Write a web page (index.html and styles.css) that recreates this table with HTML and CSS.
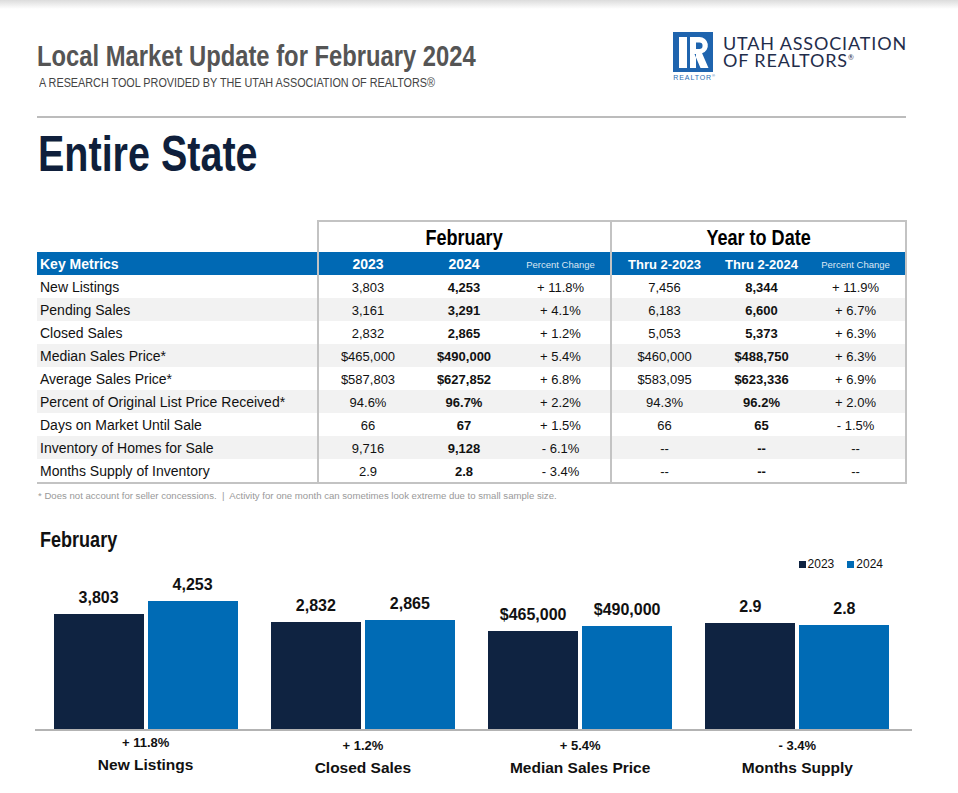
FILE: index.html
```html
<!DOCTYPE html>
<html lang="en">
<head>
<meta charset="utf-8">
<title>Local Market Update for February 2024</title>
<link rel="stylesheet" href="styles.css">
</head>
<body>
<div class="page">
  <header class="top">
    <div class="titles">
      <h1 class="title"><span class="cond cond-left">Local Market Update for February 2024</span></h1>
      <p class="sub"><span class="cond cond-left">A RESEARCH TOOL PROVIDED BY THE UTAH ASSOCIATION OF REALTORS®</span></p>
    </div>
    <div class="logo">
      <div class="logo-mark">
        <svg width="40" height="40" viewBox="0 0 40 40" aria-hidden="true">
          <rect width="40" height="40" fill="#1f64ae"/>
          <rect x="6" y="5" width="8" height="31" fill="#fff"/>
          <path fill="#fff" fill-rule="evenodd" d="M17 5h9.5a8.3 8.3 0 0 1 2.6 16.2L35.5 36h-8l-6-14H23v14h-6z M23 10.5v6.5h3.3a3.25 3.25 0 0 0 0-6.5z"/>
        </svg>
        <span class="realtor">REALTOR<sup>®</sup></span>
      </div>
      <div class="logo-name">
        <span class="ln">UTAH ASSOCIATION</span>
        <span class="ln">OF REALTORS<sup>®</sup></span>
      </div>
    </div>
  </header>
  <div class="rule"></div>

  <h2 class="area"><span class="cond-area">Entire State</span></h2>

  <table class="metrics">
    <colgroup>
      <col class="c-label"><col class="c-a"><col class="c-b"><col class="c-c"><col class="c-d"><col class="c-e"><col class="c-f">
    </colgroup>
    <thead>
      <tr class="row-grp">
        <th class="blank"></th>
        <th class="grp" colspan="3"><span class="cond">February</span></th>
        <th class="grp" colspan="3"><span class="cond">Year to Date</span></th>
      </tr>
      <tr class="row-head">
        <th class="key">Key Metrics</th>
        <th>2023</th>
        <th>2024</th>
        <th class="pc">Percent Change</th>
        <th class="thru">Thru 2-2023</th>
        <th class="thru">Thru 2-2024</th>
        <th class="pc">Percent Change</th>
      </tr>
    </thead>
    <tbody>
      <tr><td class="label">New Listings</td><td>3,803</td><td class="b">4,253</td><td>+ 11.8%</td><td>7,456</td><td class="b">8,344</td><td>+ 11.9%</td></tr>
      <tr><td class="label">Pending Sales</td><td>3,161</td><td class="b">3,291</td><td>+ 4.1%</td><td>6,183</td><td class="b">6,600</td><td>+ 6.7%</td></tr>
      <tr><td class="label">Closed Sales</td><td>2,832</td><td class="b">2,865</td><td>+ 1.2%</td><td>5,053</td><td class="b">5,373</td><td>+ 6.3%</td></tr>
      <tr><td class="label">Median Sales Price*</td><td>$465,000</td><td class="b">$490,000</td><td>+ 5.4%</td><td>$460,000</td><td class="b">$488,750</td><td>+ 6.3%</td></tr>
      <tr><td class="label">Average Sales Price*</td><td>$587,803</td><td class="b">$627,852</td><td>+ 6.8%</td><td>$583,095</td><td class="b">$623,336</td><td>+ 6.9%</td></tr>
      <tr><td class="label">Percent of Original List Price Received*</td><td>94.6%</td><td class="b">96.7%</td><td>+ 2.2%</td><td>94.3%</td><td class="b">96.2%</td><td>+ 2.0%</td></tr>
      <tr><td class="label">Days on Market Until Sale</td><td>66</td><td class="b">67</td><td>+ 1.5%</td><td>66</td><td class="b">65</td><td>- 1.5%</td></tr>
      <tr><td class="label">Inventory of Homes for Sale</td><td>9,716</td><td class="b">9,128</td><td>- 6.1%</td><td>--</td><td class="b">--</td><td>--</td></tr>
      <tr><td class="label">Months Supply of Inventory</td><td>2.9</td><td class="b">2.8</td><td>- 3.4%</td><td>--</td><td class="b">--</td><td>--</td></tr>
    </tbody>
  </table>
  <p class="note">* Does not account for seller concessions. &nbsp;|&nbsp; Activity for one month can sometimes look extreme due to small sample size.</p>

  <section class="chart">
    <h3 class="chart-title"><span class="cond cond-left">February</span></h3>
    <div class="legend">
      <span class="leg"><i class="sw sw-23"></i>2023</span>
      <span class="leg"><i class="sw sw-24"></i>2024</span>
    </div>
    <div class="plot">
      <div class="grp-bars">
        <div class="bar-col"><span class="bar-val">3,803</span><div class="bar y23" style="height:115px"></div></div>
        <div class="bar-col"><span class="bar-val">4,253</span><div class="bar y24" style="height:128px"></div></div>
      </div>
      <div class="grp-bars">
        <div class="bar-col"><span class="bar-val">2,832</span><div class="bar y23" style="height:107px"></div></div>
        <div class="bar-col"><span class="bar-val">2,865</span><div class="bar y24" style="height:109px"></div></div>
      </div>
      <div class="grp-bars">
        <div class="bar-col"><span class="bar-val">$465,000</span><div class="bar y23" style="height:98px"></div></div>
        <div class="bar-col"><span class="bar-val">$490,000</span><div class="bar y24" style="height:103px"></div></div>
      </div>
      <div class="grp-bars">
        <div class="bar-col"><span class="bar-val">2.9</span><div class="bar y23" style="height:106px"></div></div>
        <div class="bar-col"><span class="bar-val">2.8</span><div class="bar y24" style="height:104px"></div></div>
      </div>
    </div>
    <div class="captions">
      <div class="cap"><div class="pct pct-hi">+ 11.8%</div><div class="name">New Listings</div></div>
      <div class="cap"><div class="pct">+ 1.2%</div><div class="name">Closed Sales</div></div>
      <div class="cap"><div class="pct">+ 5.4%</div><div class="name">Median Sales Price</div></div>
      <div class="cap"><div class="pct">- 3.4%</div><div class="name">Months Supply</div></div>
    </div>
  </section>
</div>
</body>
</html>
```
FILE: styles.css
```css
html, body {
  margin: 0;
  padding: 0;
}
body {
  background: #fff linear-gradient(#dcdcdc, #ffffff 9px) no-repeat;
  font-family: "Liberation Sans", Arial, sans-serif;
  color: #111;
}
.page {
  width: 869px;
  margin-left: 37px;
  padding-top: 31px;
}

/* condensed text: Liberation Sans narrowed */
.cond {
  display: inline-block;
  white-space: nowrap;
  transform: scaleX(0.82);
}
.cond-left {
  transform-origin: 0 50%;
}

/* header */
.top {
  display: flex;
  justify-content: space-between;
  align-items: flex-start;
  height: 85px;
}
.titles {
  padding-top: 8px;
}
.title {
  margin: 0;
  font: bold 29px/34px "Liberation Sans", Arial, sans-serif;
  color: #555;
}
.sub {
  margin: 2px 0 0 2px;
  font: 13.2px/16px "Liberation Sans", Arial, sans-serif;
  color: #444;
}
.logo {
  display: flex;
  gap: 7px;
  margin-right: -1px;
}
.logo-mark {
  display: flex;
  flex-direction: column;
  padding-top: 1px;
}
.logo-mark svg {
  display: block;
}
.realtor {
  margin-top: 1px;
  font: 7px/9px "Liberation Sans", Arial, sans-serif;
  letter-spacing: 0.9px;
  color: #2a6cb3;
}
.realtor sup {
  font-size: 4px;
  vertical-align: top;
  line-height: 6px;
}
.logo-name {
  padding-top: 4px;
  font: 18px/17px Lato, "Open Sans", sans-serif;
  letter-spacing: 0.85px;
  color: #1f2d4b;
}
.ln {
  display: block;
  height: 17px;
}
.logo-name sup {
  font-size: 7px;
  vertical-align: top;
  line-height: 10px;
}
.rule {
  height: 2px;
  background: #bcbcbc;
}

.area {
  margin: 8px 0 0 1px;
  font: bold 50px/56px "Liberation Sans", Arial, sans-serif;
  color: #0f1f3b;
}
.cond-area {
  display: inline-block;
  white-space: nowrap;
  transform: scaleX(0.79);
  transform-origin: 0 50%;
}

/* table */
.metrics {
  margin-top: 38px;
  width: 869px;
  border-collapse: collapse;
  table-layout: fixed;
}
.c-label { width: 281px; }
.c-a { width: 99px; }
.c-b { width: 94px; }
.c-c { width: 100px; }
.c-d { width: 106px; }
.c-e { width: 89px; }
.c-f { width: 100px; }

.metrics th, .metrics td {
  padding: 0;
  text-align: center;
  white-space: nowrap;
}
.row-grp th {
  height: 30px;
}
.grp {
  border: 2px solid #c3c3c3;
  border-bottom: 0;
  vertical-align: bottom;
  font: bold 22px/28px "Liberation Sans", Arial, sans-serif;
  color: #000;
}
.row-head {
  height: 23px;
}
.row-head th {
  padding-top: 2px;
  background: #0069b4;
  color: #fff;
  font-size: 14px;
  font-weight: bold;
  line-height: 21px;
}
.row-head .key {
  text-align: left;
  padding-left: 3px;
}
.row-head .thru {
  font-size: 13px;
}
.row-head .pc {
  font-size: 9.5px;
  font-weight: normal;
  color: #dbe7f3;
}
.metrics tbody tr {
  height: 23px;
}
.metrics td {
  padding-top: 2px;
  font-size: 13px;
  line-height: 21px;
  color: #111;
}
.metrics td.label {
  text-align: left;
  padding-left: 3px;
  font-size: 14px;
}
.metrics td.b {
  font-weight: bold;
}
.metrics tbody tr:nth-child(even) {
  background: #f2f2f2;
}
.metrics tr > :nth-child(2),
.metrics tr > :nth-child(5) {
  border-left: 2px solid #c3c3c3;
}
.metrics tr > :nth-child(7) {
  border-right: 2px solid #c3c3c3;
}
.metrics tbody tr:last-child td {
  border-bottom: 2px solid #c3c3c3;
}

.note {
  margin: 6px 0 0 1px;
  font-size: 9.6px;
  line-height: 12px;
  color: #999;
}

/* chart */
.chart-title {
  margin: 26px 0 0 3px;
  font: bold 22px/24px "Liberation Sans", Arial, sans-serif;
  color: #111;
}
.legend {
  display: flex;
  justify-content: flex-end;
  gap: 13px;
  margin-top: 5px;
  padding-right: 23px;
  font-size: 12px;
  line-height: 14px;
  color: #111;
}
.leg {
  display: flex;
  align-items: center;
  gap: 2px;
}
.sw {
  display: block;
  width: 7px;
  height: 7px;
}
.sw-23 { background: #0f2341; }
.sw-24 { background: #006bb5; }

.plot {
  display: flex;
  height: 158px;
  margin: 0 -6px 0 -2px;
  padding: 0 6px 0 2px;
  border-bottom: 2px solid #b3b3b3;
}
.grp-bars {
  flex: 1;
  display: flex;
  justify-content: center;
  align-items: flex-end;
  gap: 4px;
}
.bar-col {
  width: 90px;
  display: flex;
  flex-direction: column;
  align-items: center;
}
.bar-val {
  margin-bottom: 7px;
  font-size: 16px;
  font-weight: bold;
  line-height: 18px;
}
.bar {
  align-self: stretch;
}
.y23 { background: #0f2341; }
.y24 { background: #006bb5; }

.captions {
  display: flex;
}
.cap {
  flex: 1;
  text-align: center;
}
.pct {
  margin-top: 6.5px;
  font-size: 13px;
  font-weight: bold;
  line-height: 16px;
}
.pct-hi {
  margin-top: 3.5px;
  margin-bottom: 3px;
}
.name {
  margin-top: 4px;
  font-size: 15.5px;
  font-weight: bold;
  line-height: 20px;
}
```
